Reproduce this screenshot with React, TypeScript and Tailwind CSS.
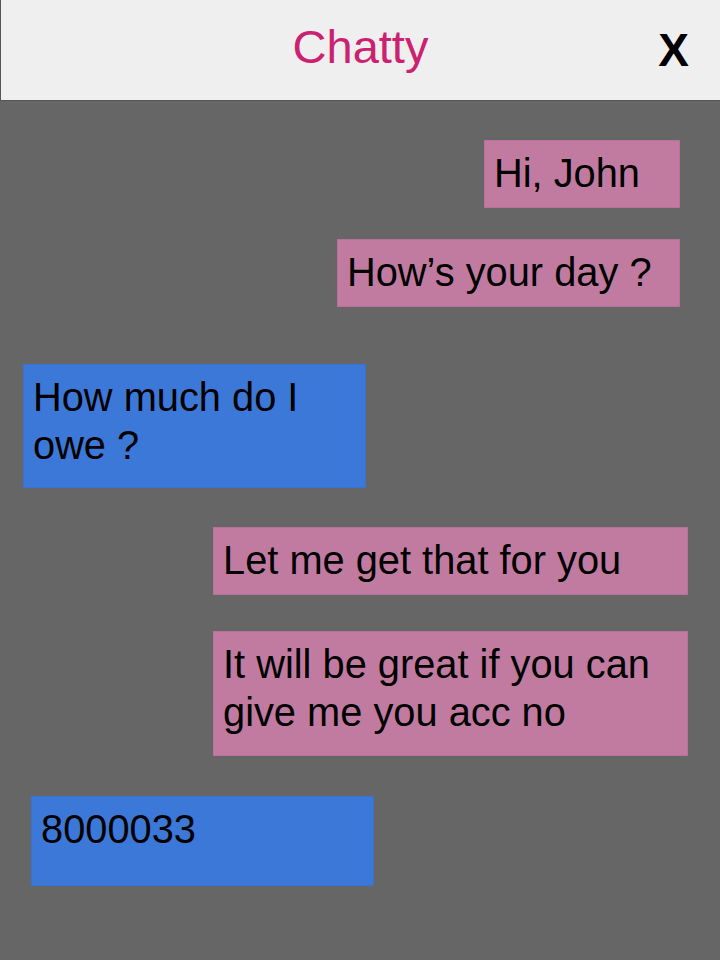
import React from 'react';

type Msg = {
  text: string;
  from: 'them' | 'me';
  cls: string;
};

// spacing per bubble taken from the mock
const messages: Msg[] = [
  { text: 'Hi, John', from: 'them', cls: 'mt-[39px] mr-[40px] w-[196px] h-[68px]' },
  { text: 'How\u2019s your day ?', from: 'them', cls: 'mt-[31px] mr-[40px] w-[343px] h-[68px]' },
  { text: 'How much do I owe ?', from: 'me', cls: 'mt-[57px] ml-[23px] w-[343px] h-[124px]' },
  { text: 'Let me get that for you', from: 'them', cls: 'mt-[39px] mr-[32px] w-[475px] h-[68px]' },
  { text: 'It will be great if you can give me you acc no', from: 'them', cls: 'mt-[36px] mr-[32px] w-[475px] h-[125px]' },
  { text: '8000033', from: 'me', cls: 'mt-[40px] ml-[31px] w-[343px] h-[90px]' },
];

function Bubble({ msg }: { msg: Msg }) {
  const side =
    msg.from === 'them' ? 'self-end bg-[#c27ba0] border-[#b7719a]' : 'self-start bg-[#3c78d8] border-[#3a73cf]';
  return (
    <div className={`${side} ${msg.cls} border pl-[9px] pr-3 pt-[8px] text-[39.8px] leading-[48px] text-black`}>
      {msg.text}
    </div>
  );
}

export default function App() {
  return (
    <div className="w-[720px] h-[960px] flex flex-col bg-[#666666]" style={{ fontFamily: '"Liberation Sans", Arial, sans-serif' }}>
      <header className="h-[101px] shrink-0 relative flex items-center justify-center bg-[#efefef] border-l border-b border-[#555555]">
        <h1 className="text-[47px] leading-none text-[#cc2170] -mt-[7px]">Chatty</h1>
        <button className="absolute right-[31px] top-[27px] text-[46px] font-bold leading-none text-black">X</button>
      </header>
      <main className="flex flex-col">
        {messages.map((m, i) => (
          <Bubble key={i} msg={m} />
        ))}
      </main>
    </div>
  );
}
